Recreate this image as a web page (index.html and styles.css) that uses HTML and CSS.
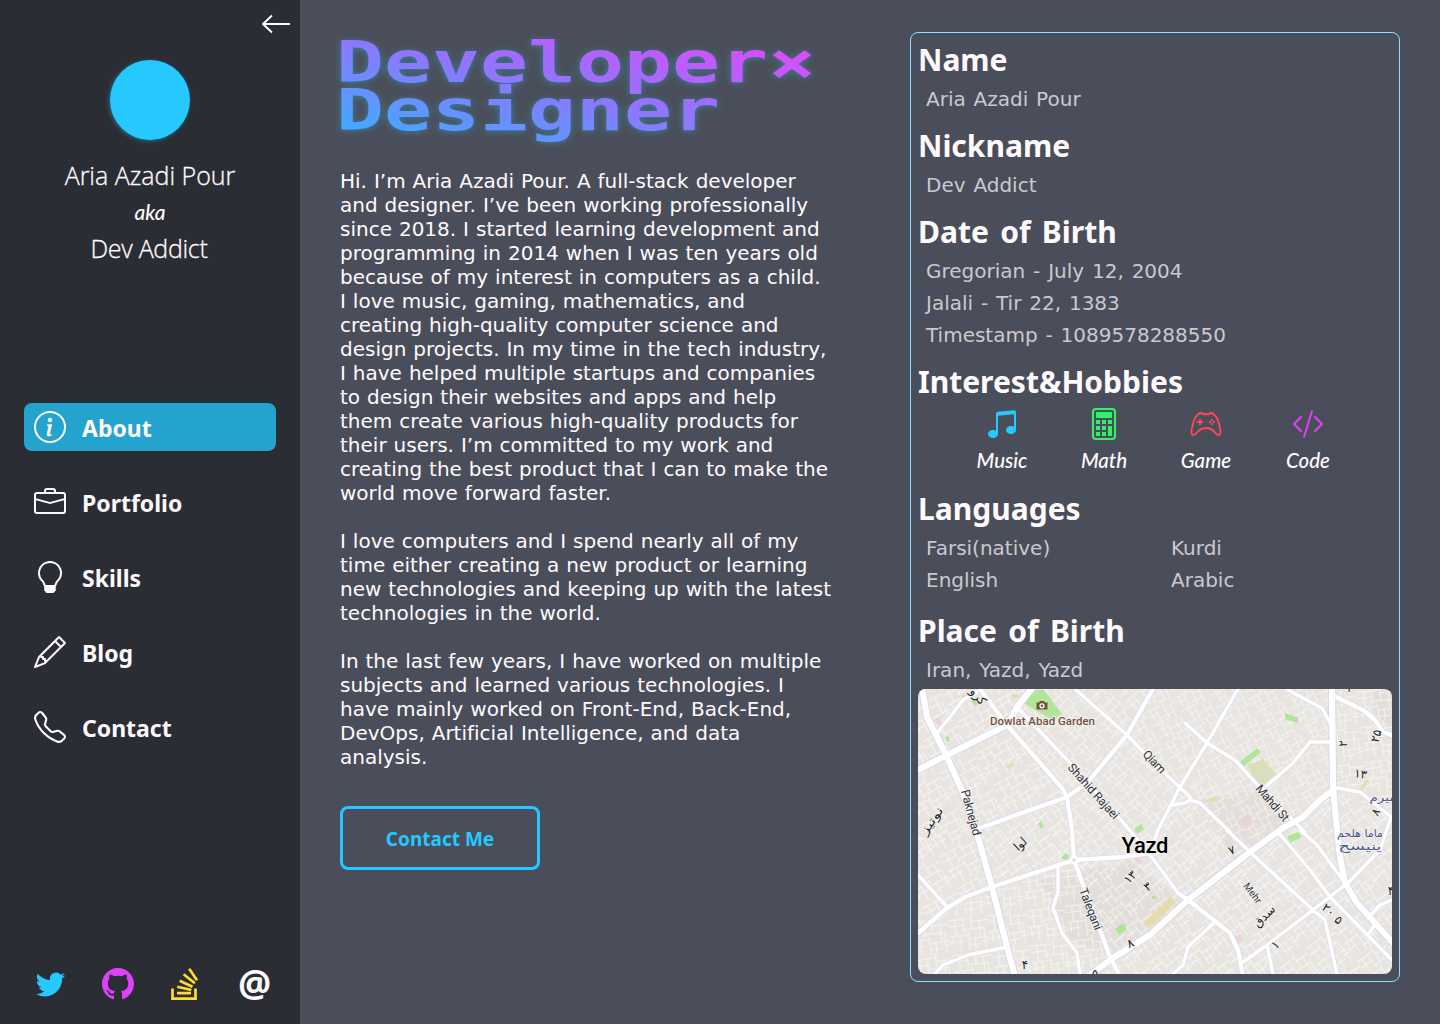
FILE: index.html
```html
<!DOCTYPE html>
<html lang="en">
<head>
<meta charset="utf-8">
<title>Aria Azadi Pour</title>
<link rel="stylesheet" href="styles.css">
</head>
<body>
<aside class="sidebar">
  <svg class="back" viewBox="0 0 30 20"><path d="M29 10H3M11 1.500 2 10l9 8.500" fill="none" stroke="currentColor" stroke-width="2" stroke-linejoin="round"/></svg>
  <div class="avatar"></div>
  <div class="person">
    <div class="pname">Aria Azadi Pour</div>
    <div class="aka">aka</div>
    <div class="pname nick">Dev Addict</div>
  </div>
  <nav class="nav">
    <a class="item active"><svg viewBox="0 0 16 16"><path d="M8 15A7 7 0 1 1 8 1a7 7 0 0 1 0 14m0 1A8 8 0 1 0 8 0a8 8 0 0 0 0 16"/><path d="m8.930 6.588-2.290.287-.082.380.450.083c.294.070.352.176.288.469l-.738 3.468c-.194.897.105 1.319.808 1.319.545 0 1.178-.252 1.465-.598l.088-.416c-.2.176-.492.246-.686.246-.275 0-.375-.193-.304-.533zM9 4.500a1 1 0 1 1-2 0 1 1 0 0 1 2 0" stroke="currentColor" stroke-width=".2"/></svg><span>About</span></a>
    <a class="item"><svg viewBox="0 0 16 16"><path d="M6.500 1A1.500 1.500 0 0 0 5 2.500V3H1.500A1.500 1.500 0 0 0 0 4.500v8A1.500 1.500 0 0 0 1.500 14h13a1.500 1.500 0 0 0 1.500-1.500v-8A1.500 1.500 0 0 0 14.500 3H11v-.5A1.500 1.500 0 0 0 9.500 1zm0 1h3a.5.5 0 0 1 .5.5V3H6v-.5a.5.5 0 0 1 .5-.5m1.886 6.914L15 7.151V12.500a.5.5 0 0 1-.5.5h-13a.5.5 0 0 1-.5-.5V7.150l6.614 1.764a1.500 1.500 0 0 0 .772 0M1.500 4h13a.5.5 0 0 1 .5.5v1.616L8.129 7.948a.5.5 0 0 1-.258 0L1 6.116V4.500a.5.5 0 0 1 .5-.5"/></svg><span>Portfolio</span></a>
    <a class="item"><svg viewBox="0 0 16 16"><path d="M2 6a6 6 0 1 1 10.174 4.310c-.203.196-.359.4-.453.619l-.762 1.769A.5.5 0 0 1 10.500 13a.5.5 0 0 1 0 1 .5.5 0 0 1 0 1l-.224.447a1 1 0 0 1-.894.553H6.618a1 1 0 0 1-.894-.553L5.500 15a.5.5 0 0 1 0-1 .5.5 0 0 1 0-1 .5.5 0 0 1-.46-.302l-.761-1.770a2 2 0 0 0-.453-.618A5.980 5.980 0 0 1 2 6m6-5a5 5 0 0 0-3.479 8.592c.263.254.514.564.676.941L5.830 12h4.342l.632-1.467c.162-.377.413-.687.676-.941A5 5 0 0 0 8 1"/></svg><span>Skills</span></a>
    <a class="item"><svg viewBox="0 0 16 16"><path d="M12.146.146a.5.5 0 0 1 .708 0l3 3a.5.5 0 0 1 0 .708l-10 10a.5.5 0 0 1-.168.110l-5 2a.5.5 0 0 1-.65-.65l2-5a.5.5 0 0 1 .110-.168zM11.207 2.500 13.500 4.793 14.793 3.500 12.500 1.207zm1.586 3L10.500 3.207 4 9.707V10h.5a.5.5 0 0 1 .5.5v.5h.5a.5.5 0 0 1 .5.5v.5h.293zm-9.761 5.175-.106.106-1.528 3.821 3.821-1.528.106-.106A.5.5 0 0 1 5 12.500V12h-.5a.5.5 0 0 1-.5-.5V11h-.5a.5.5 0 0 1-.468-.325"/></svg><span>Blog</span></a>
    <a class="item"><svg viewBox="0 0 16 16"><path d="M3.654 1.328a.678.678 0 0 0-1.015-.063L1.605 2.300c-.483.484-.661 1.169-.45 1.770a17.600 17.600 0 0 0 4.168 6.608 17.600 17.600 0 0 0 6.608 4.168c.601.211 1.286.033 1.770-.45l1.034-1.034a.678.678 0 0 0-.063-1.015l-2.307-1.794a.68.68 0 0 0-.58-.122l-2.190.547a1.750 1.750 0 0 1-1.657-.459L5.482 8.062a1.750 1.750 0 0 1-.46-1.657l.548-2.190a.68.68 0 0 0-.122-.58zM1.884.511a1.745 1.745 0 0 1 2.612.163L6.290 2.980c.329.423.445.974.315 1.494l-.547 2.190a.68.68 0 0 0 .178.643l2.457 2.457a.68.68 0 0 0 .644.178l2.189-.547a1.750 1.750 0 0 1 1.494.315l2.306 1.794c.829.645.905 1.870.163 2.611l-1.034 1.034c-.74.740-1.846 1.065-2.877.702a18.600 18.600 0 0 1-7.010-4.420 18.600 18.600 0 0 1-4.420-7.009c-.362-1.030-.037-2.137.703-2.877z"/></svg><span>Contact</span></a>
  </nav>
  <div class="social">
    <svg class="tw" viewBox="-0.900 -0.500 17.400 17.400"><path d="M5.026 15c6.038 0 9.341-5.003 9.341-9.334q.002-.211-.006-.422A6.700 6.700 0 0 0 16 3.542a6.700 6.700 0 0 1-1.889.518 3.300 3.300 0 0 0 1.447-1.817 6.500 6.500 0 0 1-2.087.793A3.286 3.286 0 0 0 7.875 6.030a9.320 9.320 0 0 1-6.767-3.429 3.290 3.290 0 0 0 1.018 4.382A3.300 3.300 0 0 1 .64 6.575v.045a3.290 3.290 0 0 0 2.632 3.218 3.200 3.200 0 0 1-.865.115 3 3 0 0 1-.614-.057 3.280 3.280 0 0 0 3.067 2.277A6.600 6.600 0 0 1 .78 13.580a6 6 0 0 1-.78-.045A9.340 9.340 0 0 0 5.026 15"/></svg>
    <svg class="gh" viewBox="0 0 16 16"><path d="M8 0C3.580 0 0 3.580 0 8c0 3.540 2.290 6.530 5.470 7.590.4.070.55-.17.55-.38 0-.19-.01-.82-.01-1.490-2.010.37-2.530-.49-2.690-.94-.09-.23-.48-.94-.82-1.130-.28-.15-.68-.52-.01-.53.63-.01 1.080.58 1.230.82.72 1.210 1.870.87 2.330.66.070-.52.28-.87.51-1.070-1.780-.2-3.640-.89-3.640-3.950 0-.87.31-1.590.82-2.150-.08-.2-.36-1.020.08-2.120 0 0 .67-.21 2.200.82.64-.18 1.320-.27 2-.27s1.360.090 2 .27c1.530-1.040 2.200-.82 2.200-.82.44 1.100.16 1.920.08 2.120.51.56.82 1.270.82 2.150 0 3.070-1.870 3.750-3.650 3.950.29.25.54.73.54 1.480 0 1.070-.01 1.930-.01 2.200 0 .21.15.46.55.38A8.010 8.010 0 0 0 16 8c0-4.420-3.580-8-8-8"/></svg>
    <svg class="so" viewBox="0 0 32 32"><path d="M3.500 20.500v10.100h23V20.500M8 25.200h14M8.300 18.700l14 3.300M10.700 12.700l12.800 6M14.600 6.300l11.300 9M20.200.8l7.800 11.400" fill="none" stroke="currentColor" stroke-width="2.700"/></svg>
    <span class="at">@</span>
  </div>
</aside>
<main class="main">
  <section class="intro">
    <h1 class="title">Developer×<br>Designer</h1>
    <p>Hi. I’m Aria Azadi Pour. A full-stack developer<br>and designer. I’ve been working professionally<br>since 2018. I started learning development and<br>programming in 2014 when I was ten years old<br>because of my interest in computers as a child.<br>I love music, gaming, mathematics, and<br>creating high-quality computer science and<br>design projects. In my time in the tech industry,<br>I have helped multiple startups and companies<br>to design their websites and apps and help<br>them create various high-quality products for<br>their users. I’m committed to my work and<br>creating the best product that I can to make the<br>world move forward faster.</p>
    <p>I love computers and I spend nearly all of my<br>time either creating a new product or learning<br>new technologies and keeping up with the latest<br>technologies in the world.</p>
    <p>In the last few years, I have worked on multiple<br>subjects and learned various technologies. I<br>have mainly worked on Front-End, Back-End,<br>DevOps, Artificial Intelligence, and data<br>analysis.</p>
    <a class="button">Contact Me</a>
  </section>
  <section class="card">
    <div class="block"><h2>Name</h2><div class="row">Aria Azadi Pour</div></div>
    <div class="block"><h2>Nickname</h2><div class="row">Dev Addict</div></div>
    <div class="block"><h2>Date of Birth</h2><div class="row">Gregorian - July 12, 2004</div><div class="row">Jalali - Tir 22, 1383</div><div class="row">Timestamp - 1089578288550</div></div>
    <div class="block"><h2>Interest&amp;Hobbies</h2>
      <div class="hobbies">
        <div class="hobby"><svg class="c-music" viewBox="0 0 16 16"><path d="M6 13c0 1.105-1.120 2-2.500 2S1 14.105 1 13c0-1.104 1.120-2 2.500-2s2.500.896 2.500 2m9-2c0 1.105-1.120 2-2.500 2s-2.500-.895-2.500-2 1.120-2 2.500-2 2.500.895 2.500 2"/><path d="M14 11V2h1v9zM6 3v10H5V3z"/><path d="M5 2.905a1 1 0 0 1 .9-.995l8-.8a1 1 0 0 1 1.100.995V3L5 4z"/></svg><span>Music</span></div>
        <div class="hobby"><svg class="c-math" viewBox="0 0 16 16"><rect x="2.500" y=".5" width="11" height="15" rx="1.500" fill="none" stroke="currentColor"/><path d="M4 2h8v3H4zM4 6h2v2H4zM7 6h2v2H7zM10 6h2v2h-2zM4 9h2v2H4zM7 9h2v2H7zM10 9h2v5h-2zM4 12h2v2H4zM7 12h2v2H7z"/></svg><span>Math</span></div>
        <div class="hobby"><svg class="c-game" viewBox="0 0 32 32"><path d="M8.200 6.500Q10 4.500 12.500 5.600L13.500 6.200h5l1-.6Q22 4.500 23.800 6.500 26.500 8 28.500 14 31.500 24.500 30 26.300 28 28 25.500 25 21.500 20 16 20 10.500 20 6.500 25 4 28 2 26.300.5 24.500 3.500 14 5.500 8 8.200 6.500Z" fill="none" stroke="currentColor" stroke-width="1.900"/><path d="M7.500 6.800Q9 4.500 12 4.700L13.500 6.200h5L20 4.700q3-.2 4.500 2.100" fill="none" stroke="currentColor" stroke-width="1.600"/><path d="M7 14h6M10 11v6" stroke="currentColor" stroke-width="2"/><path d="M21 11h2v2h-2zM21 15h2v2h-2zM19 13h2v2h-2zM23 13h2v2h-2z"/></svg><span>Game</span></div>
        <div class="hobby"><svg class="c-code" viewBox="0 0 16 16"><path d="M10.478 1.647a.5.5 0 1 0-.956-.294l-4 13a.5.5 0 0 0 .956.294zM4.854 4.146a.5.5 0 0 1 0 .708L1.707 8l3.147 3.146a.5.5 0 0 1-.708.708l-3.500-3.500a.5.5 0 0 1 0-.708l3.500-3.500a.5.5 0 0 1 .708 0m6.292 0a.5.5 0 0 0 0 .708L14.293 8l-3.147 3.146a.5.5 0 0 0 .708.708l3.500-3.500a.5.5 0 0 0 0-.708l-3.500-3.500a.5.5 0 0 0-.708 0"/></svg><span>Code</span></div>
      </div>
    </div>
    <div class="block wide"><h2>Languages</h2><div class="langs"><div class="row">Farsi(native)</div><div class="row">Kurdi</div><div class="row">English</div><div class="row">Arabic</div></div></div>
    <div class="block"><h2>Place of Birth</h2><div class="row">Iran, Yazd, Yazd</div></div>
    <svg class="map" viewBox="918 689 474 285">
      <defs>
        <pattern id="lanes" width="58" height="52" patternUnits="userSpaceOnUse"><path d="M0 6H34M34 0V22M10 6V30M0 15H22M22 6V26M34 11H58M46 11V34M22 22H52M0 30H28M28 26V52M5 30V44M0 39H20M15 30V52M28 36H58M37 34V52M28 45H46M52 22V52M58 41H46" /></pattern>
        <pattern id="lanesA" href="#lanes" patternTransform="rotate(-29) scale(.7)"/>
        <pattern id="lanesB" href="#lanes" patternTransform="rotate(47) scale(.66)"/>
        <pattern id="lanesC" href="#lanes" patternTransform="rotate(-37) scale(.58 .8)"/>
        <pattern id="lanesD" href="#lanes" patternTransform="rotate(-7) scale(.68)"/>
        <pattern id="lanesE" href="#lanes" patternTransform="rotate(62) scale(.62)"/>
        <path id="minor" d="M937 733 950 717 963 700 977 692M1017 707 1070 763 1127 827 1150 855 1178 893M1075 689 1127 735 1158 767 1190 797M1238 689 1207 743 1180 787 1158 830 1150 853M1185 723 1207 743 1235 760 1262 790 1305 832M1287 689 1297 695 1322 708 1330 723M1330 742H1310L1293 763 1262 790M1337 788 1360 792 1391 817 1380 850 1348 883M1227 830 1250 852 1313 910 1325 920 1337 974M1345 885 1313 910 1267 945 1243 962M1267 945 1273 974M1215 922 1188 947 1183 965 1173 974M918 875 947 907M1058 865 1058 892 1053 908 1062 933 1077 953 1080 974M1007 947 968 955 943 965 933 976M1173 805 1185 803 1190 800 1200 803 1230 832M1392 900 1380 905 1368 918M1278 832 1310 870 1330 897 1392 960M1300 830 1317 845 1345 883M1374 926 1368 935"/>
        <path id="mid" d="M980 689 1007 725 1062 788 1067 797 1072 830 1074 860 1110 957 1120 976M980 828 1067 797 1087 783 1127 735 1154 687M918 933 947 908 965 897 992 887 1074 860 1123 857 1150 853M1178 893 1188 900 1230 933 1238 950 1243 976M1332 695 1363 710 1375 720 1383 732 1394 736"/>
        <path id="major" d="M922 687 927 717 947 757 963 793 978 837 992 887 1007 947 1015 976M916 771 947 755 1007 725 1017 707 1033 687M1332 687 1333 787 1337 830 1340 857 1345 883 1357 903 1394 944M1333 790 1320 800 1303 817 1283 828 1250 852 1188 900 1150 935 1113 958 1088 976"/>
      </defs>
      <rect x="918" y="689" width="474" height="285" fill="#e8e5e1"/>
      <path fill="#e3ded9" d="M1040 880 1130 860 1185 905 1110 955 1070 940ZM1200 800 1260 790 1290 826 1235 860ZM1372 690h20v38l-18-15Z"/>
      <g class="lanes">
        <path fill="url(#lanesA)" d="M918 689H1033L1007 725 1067 797 980 828 992 887 918 933Z"/>
        <path fill="url(#lanesB)" d="M1033 689H1153L1127 735 1067 797 1007 725ZM1127 735 1180 787 1150 853 1074 860 1067 797Z"/>
        <path fill="url(#lanesE)" d="M1153 689H1238L1180 787 1127 735ZM1238 689H1332L1333 790 1250 852 1188 795 1207 743Z"/>
        <path fill="url(#lanesD)" d="M918 933 992 887 1074 860 1110 957 1090 974H918ZM1332 689H1392V820L1333 787Z"/>
        <path fill="url(#lanesC)" d="M980 828 1067 797 1074 860 992 887ZM1074 860 1150 853 1180 787 1250 852 1113 958ZM1113 958 1333 790 1392 817V974H1090Z"/>
      </g>
      <g fill="#b2e59a">
        <path d="M1022 702 1032 690H1044L1062 714 1053 720 1037 711ZM971 701 976 698 979 704 975 706ZM945 737 948 736 950 740 947 742ZM1285 713 1299 718 1297 723 1285 719ZM1257 748 1261 752 1244 766 1240 762ZM1287 836 1298 832 1302 837 1290 843ZM1061 858 1065 853 1069 856 1067 861ZM1115 929 1123 923 1127 929 1119 935ZM1038 824 1041 821 1044 827 1041 829ZM1134 829 1141 824 1144 829 1137 834ZM1152 896h4v3h-4ZM1247 817l5 2-3 3Z"/>
      </g>
      <path fill="#d8dfbd" d="M1247 765 1254 763 1263 759 1276 774 1263 785 1257 784Z"/>
      <path fill="#e5dcae" d="M1143 923 1171 897 1176 902 1150 928ZM1365 781 1360 789 1363 790 1369 779ZM1006 767 1012 762 1014 765 1009 769ZM1207 800l10-5v6l-10 2ZM1012 694h6v4h-6ZM962 694h5v4h-5Z"/>
      <path fill="#ead3da" d="M934 720 939 717 942 723 938 726ZM1240 823 1247 813 1253 822 1247 829ZM1133 856 1138 856 1142 862 1139 865ZM1234 937 1240 934 1243 940 1238 945Z"/>
      <g class="roads">
        <use href="#minor" class="minor-case"/>
        <use href="#mid" class="mid-case"/>
        <use href="#major" class="major-case"/>
        <use href="#minor" class="minor-top"/>
        <use href="#mid" class="mid-top"/>
        <use href="#major" class="major-top"/>
      </g>
      <circle cx="1074" cy="860" r="3" fill="#e4e2ea" stroke="#fff" stroke-width="2"/>
      <path fill="#75503f" d="M1037 702.500h2l1-1.500h4l1 1.500h2.500v7H1036.500v-7Z"/><circle cx="1042" cy="705.800" r="2" fill="none" stroke="#fff" stroke-width="1.300"/>
      <g class="labels">
        <text x="990" y="725" textLength="105" class="garden">Dowlat Abad Garden</text>
        <text x="1121.500" y="853" textLength="47" class="city">Yazd</text>
        <text transform="translate(1067 768) rotate(48)" textLength="70">Shahid Rajaei</text>
        <text transform="translate(1142 755) rotate(46)" textLength="27">Qiam</text>
        <text transform="translate(961 791) rotate(75)" textLength="47">Paknejad</text>
        <text transform="translate(1255 789) rotate(49)" textLength="44">Mahdi St</text>
        <text transform="translate(1079 890) rotate(69)" textLength="44">Taleqani</text>
        <text transform="translate(1243 886) rotate(53)" textLength="23" class="sm">Mehr</text>
        <g class="fa" text-anchor="middle">
          <text transform="translate(935 823) rotate(-55) scale(1.350 1)">نوتیز</text>
          <text transform="translate(1023 847) rotate(-43)">لوا</text>
          <text transform="translate(975 699) rotate(50)">کرو</text>
          <text transform="translate(1267 919) rotate(-45)">سدق</text>
          <text x="1360" y="837" class="blue" textLength="46" lengthAdjust="spacingAndGlyphs">ماما هلحم</text>
          <text x="1360" y="850" class="blue" textLength="43" lengthAdjust="spacingAndGlyphs">ینیسح</text>
          <text x="1383" y="801" class="blue" textLength="27" lengthAdjust="spacingAndGlyphs">میرم</text>
          <text transform="translate(1347 744) rotate(-85)">۲</text>
          <text transform="translate(1380 737) rotate(-75)">۲۵</text>
          <text transform="translate(1360 778) rotate(8)">۱۳</text>
          <text transform="translate(1379 814) rotate(-60)">۸</text>
          <text transform="translate(1233 854) rotate(-20)">۷</text>
          <text transform="translate(1133 880) rotate(-45)">۱۳</text>
          <text transform="translate(1150 890) rotate(-35)">۳</text>
          <text transform="translate(1132 947) rotate(-25)">۸</text>
          <text x="1025" y="969">۴</text>
          <text transform="translate(1326 913) rotate(40)">۲۰</text>
          <text transform="translate(1336 923) rotate(40)">۵</text>
          <text transform="translate(1278 948) rotate(-40)">۱</text>
          <text x="1095" y="978">۵</text>
          <text x="1350" y="692">۳</text>
          <text x="1391" y="895">۴</text>
        </g>
      </g>
    </svg>
  </section>
</main>
</body>
</html>
```
FILE: styles.css
```css
* { box-sizing: border-box; }
body { margin: 0; display: flex; width: 1440px; height: 1024px; overflow: hidden; background: #4a4e5a; color: #fffafe; font-family: "DejaVu Sans", sans-serif; font-variant-ligatures: none; }
svg { fill: currentColor; flex: none; }
.sidebar { width: 300px; height: 1024px; background: #2b2d35; display: flex; flex-direction: column; align-items: center; padding: 14px 24px 24px; }
.back { width: 30px; height: 20px; align-self: flex-end; margin-right: -15px; }
.avatar { width: 80px; height: 80px; border-radius: 50%; background: #25c9ff; margin-top: 26px; box-shadow: -1px 1px 4px rgba(37, 201, 255, .4); }
.person { height: 263px; padding-top: 17px; text-align: center; white-space: nowrap; }
.pname { font: 300 25px/36px "Open Sans", sans-serif; -webkit-text-stroke: .3px currentColor; }
.nick { letter-spacing: -.3px; margin-right: 2px; }
.aka { font: italic 500 21px/37px Lato, sans-serif; }
.nav { width: 252px; display: flex; flex-direction: column; gap: 27px; }
.item { height: 48px; display: flex; align-items: center; gap: 16px; padding-left: 10px; border-radius: 8px; font: 700 23px/46px "Noto Sans", sans-serif; }
.item span { padding-top: 2px; }
.item svg { width: 32px; height: 32px; }
.active { background: #25a3cf; }
.social { width: 252px; margin-top: auto; padding: 0 5px 0 10px; display: flex; justify-content: space-between; }
.social svg { width: 32px; height: 32px; }
.tw, .c-music { color: #25c9ff; }
.gh, .c-code { color: #e040fb; }
.so { color: #ffdd2d; }
.at { width: 33px; height: 32px; margin-left: 1px; font: 700 37px/29px "Open Sans", sans-serif; display: flex; justify-content: center; }
.main { flex: 1; display: flex; justify-content: space-between; padding: 32px 40px 42px; }
.intro { width: 500px; }
.title { margin: 4px 0 21px -4px; padding: 3px 0 0; width: 345px; height: 112px; font: 700 57.600px/48px "DejaVu Sans Mono", monospace; transform: scaleX(1.384); transform-origin: 0 0; color: transparent; background: linear-gradient(to top right, #3fabff 8%, #8f76ff 50%, #e646fb 96%); background-clip: text; -webkit-background-clip: text; filter: drop-shadow(0 1px 3px rgba(37, 201, 255, .4)); white-space: nowrap; }
.intro p { margin: 0 0 24px; font-size: 20px; line-height: 24px; word-spacing: .6px; white-space: nowrap; }
.button { display: block; margin-top: 37px; width: 200px; height: 64px; border: 3px solid #25c9ff; border-radius: 8px; color: #25c9ff; text-align: center; font: 700 19px/60px "Noto Sans", sans-serif; }
.card { width: 490px; height: 950px; border: 1px solid #8fdfff; border-radius: 8px; padding: 4px 7px 7px; display: flex; flex-direction: column; }
.block { margin-bottom: 8px; }
.wide { margin-bottom: 12px; }
.block:last-of-type { margin-bottom: 3px; }
h2 { margin: 0; font: 700 30px/46px "Noto Sans", sans-serif; word-spacing: 3.500px; white-space: nowrap; }
.row { height: 32px; padding-left: 8px; font-size: 20px; line-height: 32px; color: #cbc9d0; word-spacing: 1.500px; white-space: nowrap; }
.hobbies { height: 73px; padding: 3px 33px 0; display: grid; grid-template-columns: repeat(4, 102px); }
.hobby { display: flex; flex-direction: column; align-items: center; }
.hobby svg { width: 32px; height: 32px; }
.hobby span { font: italic 500 20.500px/40px Lato, sans-serif; }
.c-math { color: #2ef268; }
.c-game { color: #ff4757; }
.langs { display: grid; grid-template-columns: 245px 1fr; }
.map { display: block; width: 474px; height: 285px; border-radius: 8px; overflow: hidden; }
#lanes path { fill: none; stroke: #fff; stroke-width: 1.300; }
.lanes { opacity: .75; }
.roads { fill: none; stroke-linejoin: round; stroke-linecap: round; }
.minor-case { stroke: #dfdeea; stroke-width: 5; }
.minor-top { stroke: #fff; stroke-width: 3.400; }
.mid-case { stroke: #dad9e8; stroke-width: 6; }
.mid-top { stroke: #fff; stroke-width: 4.400; }
.major-case { stroke: #d6d6e8; stroke-width: 8; }
.major-top { stroke: #fff; stroke-width: 6.200; }
.labels text { font: 12px Roboto, sans-serif; fill: #33333a; paint-order: stroke; stroke: #f3f1ee; stroke-width: 1.500px; }
.labels .garden { fill: #75503f; font-weight: 500; font-size: 11.500px; }
.labels .city { font-weight: 500; font-size: 22px; fill: #000; stroke-width: 2.500px; }
.labels .sm { font-size: 10px; }
.labels .fa text { font: 12px "DejaVu Sans", sans-serif; fill: #222; }
.labels .fa .blue { fill: #4b5590; font-size: 11px; }
```
